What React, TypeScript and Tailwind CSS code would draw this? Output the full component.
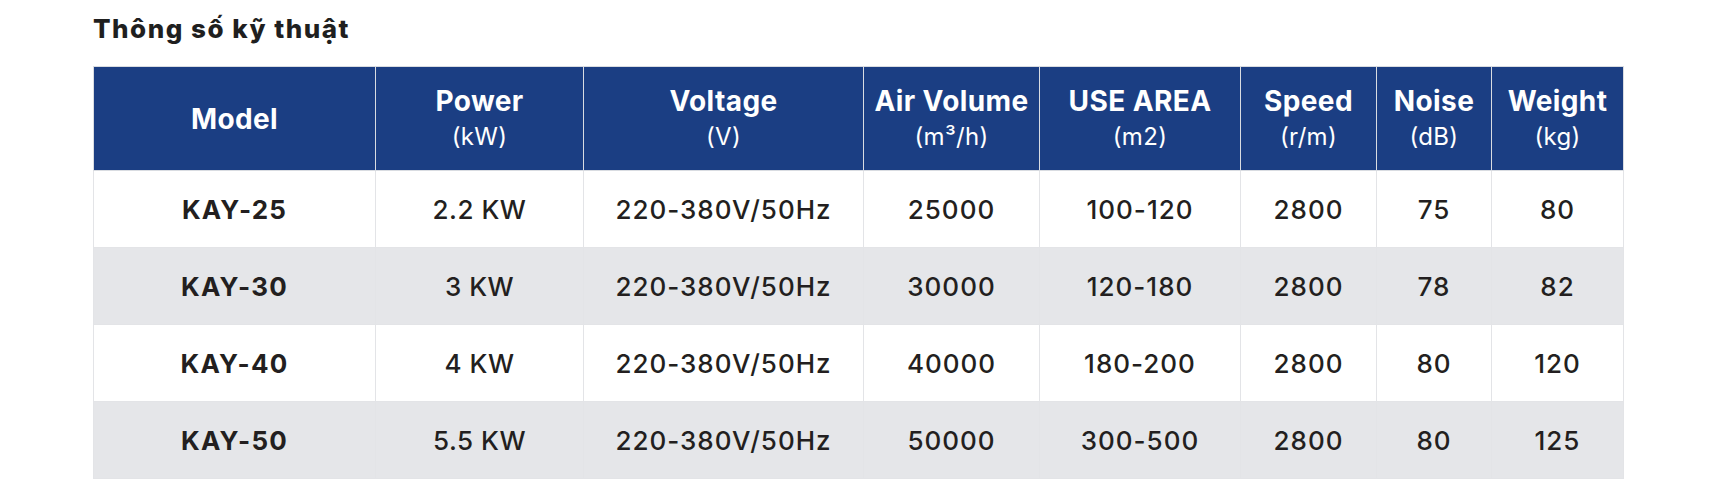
import React from 'react';

interface SpecRow {
    model: string;
    power: string;
    voltage: string;
    air: string;
    area: string;
    speed: string;
    noise: string;
    weight: string;
}

const columns = [
    { title: 'Model', unit: '', width: 'w-[282px]' },
    { title: 'Power', unit: '(kW)', width: 'w-[208px]' },
    { title: 'Voltage', unit: '(V)', width: 'w-[280px]' },
    { title: 'Air Volume', unit: '(m³/h)', width: 'w-[176px]' },
    { title: 'USE AREA', unit: '(m2)', width: 'w-[201px]' },
    { title: 'Speed', unit: '(r/m)', width: 'w-[136px]' },
    { title: 'Noise', unit: '(dB)', width: 'w-[115px]' },
    { title: 'Weight', unit: '(kg)', width: 'w-[132px]' },
];

const rows: SpecRow[] = [
    { model: 'KAY-25', power: '2.2 KW', voltage: '220-380V/50Hz', air: '25000', area: '100-120', speed: '2800', noise: '75', weight: '80' },
    { model: 'KAY-30', power: '3 KW', voltage: '220-380V/50Hz', air: '30000', area: '120-180', speed: '2800', noise: '78', weight: '82' },
    { model: 'KAY-40', power: '4 KW', voltage: '220-380V/50Hz', air: '40000', area: '180-200', speed: '2800', noise: '80', weight: '120' },
    { model: 'KAY-50', power: '5.5 KW', voltage: '220-380V/50Hz', air: '50000', area: '300-500', speed: '2800', noise: '80', weight: '125' },
];

const App: React.FC = () => {
    return (
        <div className="min-h-screen bg-white pl-[93px] pt-[14px] font-['Inter',sans-serif] text-[#231f20]">
            <h2 className="mb-[22px] text-[26px] leading-[30px] font-extrabold tracking-[1.5px] text-[#1f1f1f]">Thông số kỹ thuật</h2>

            <table className="w-[1531px] table-fixed border-collapse">
                <thead>
                    <tr className="h-[104px] bg-[#1b3e83] text-white">
                        {columns.map((col) => (
                            <th
                                key={col.title}
                                className={`${col.width} border border-[#d9dce1] px-1 text-center align-middle font-bold`}
                            >
                                <div className="text-[28px] leading-[36px] tracking-[0.4px]">{col.title}</div>
                                {col.unit && (
                                    <div className="text-[24px] leading-[36px] font-normal tracking-[0.3px]">{col.unit}</div>
                                )}
                            </th>
                        ))}
                    </tr>
                </thead>
                <tbody>
                    {rows.map((row, i) => (
                        <tr key={row.model} className={`h-[77px] ${i % 2 === 1 ? 'bg-[#e5e6e9]' : 'bg-white'}`}>
                            <td className="border border-[#e3e4e7] text-center text-[26px] font-bold tracking-[1.2px]">{row.model}</td>
                            <td className="border border-[#e3e4e7] text-center text-[26px] font-medium tracking-[0.5px]">{row.power}</td>
                            <td className="border border-[#e3e4e7] text-center text-[26px] font-medium tracking-[1px]">{row.voltage}</td>
                            <td className="border border-[#e3e4e7] text-center text-[26px] font-medium tracking-[1px]">{row.air}</td>
                            <td className="border border-[#e3e4e7] text-center text-[26px] font-medium tracking-[1px]">{row.area}</td>
                            <td className="border border-[#e3e4e7] text-center text-[26px] font-medium tracking-[1px]">{row.speed}</td>
                            <td className="border border-[#e3e4e7] text-center text-[26px] font-medium tracking-[1px]">{row.noise}</td>
                            <td className="border border-[#e3e4e7] text-center text-[26px] font-medium tracking-[1px]">{row.weight}</td>
                        </tr>
                    ))}
                </tbody>
            </table>
        </div>
    );
};

export default App;
